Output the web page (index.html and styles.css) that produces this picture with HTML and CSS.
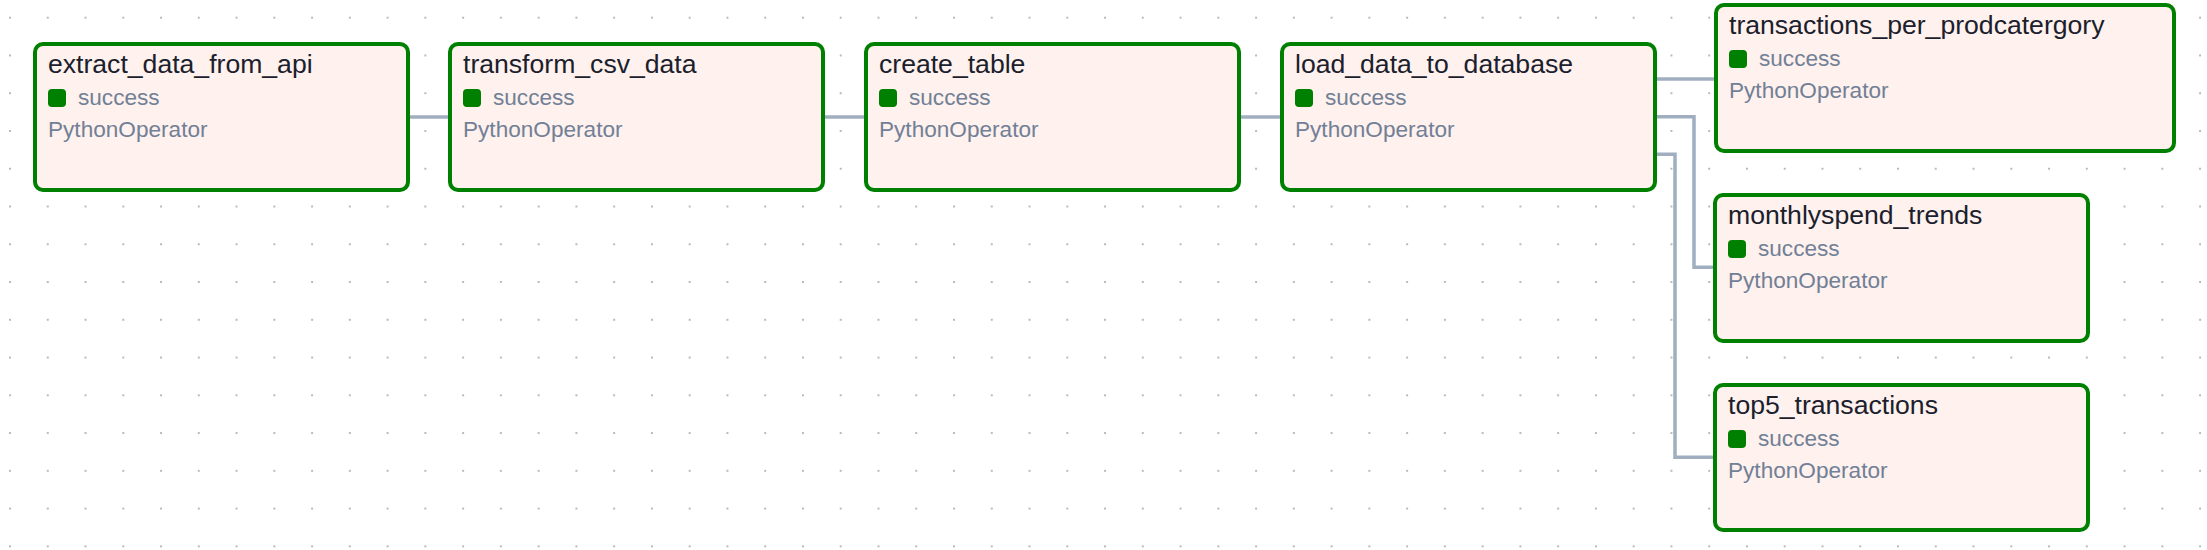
FILE: index.html
```html
<!DOCTYPE html>
<html>
<head>
<meta charset="utf-8">
<link rel="stylesheet" href="styles.css">
</head>
<body>
<div class="canvas">
  <svg class="layer" width="2207" height="550" viewBox="0 0 2207 550">
    <defs>
      <pattern id="dots" patternUnits="userSpaceOnUse" x="-8.88" y="-1.18" width="37.76" height="37.76">
        <circle cx="18.88" cy="18.88" r="1" fill="#a3a3a3"/>
      </pattern>
    </defs>
    <rect width="2207" height="550" fill="url(#dots)"/>
    <g class="edges" fill="none" stroke="#a0aec0" stroke-width="3.5">
      <path d="M410 117 H449"/>
      <path d="M825 117 H865"/>
      <path d="M1241 117 H1281"/>
      <path d="M1656 79 H1715"/>
      <path d="M1656 116.7 H1694 V267.3 H1714"/>
      <path d="M1656 154.3 H1675 V457.3 H1714"/>
    </g>
  </svg>

  <div class="node" style="left:33px;top:42px;width:377px;height:150px">
    <div class="title">extract_data_from_api</div>
    <div class="state"><span class="sq"></span>success</div>
    <div class="op">PythonOperator</div>
  </div>
  <div class="node" style="left:448px;top:42px;width:377px;height:150px">
    <div class="title">transform_csv_data</div>
    <div class="state"><span class="sq"></span>success</div>
    <div class="op">PythonOperator</div>
  </div>
  <div class="node" style="left:864px;top:42px;width:377px;height:150px">
    <div class="title">create_table</div>
    <div class="state"><span class="sq"></span>success</div>
    <div class="op">PythonOperator</div>
  </div>
  <div class="node" style="left:1280px;top:42px;width:377px;height:150px">
    <div class="title">load_data_to_database</div>
    <div class="state"><span class="sq"></span>success</div>
    <div class="op">PythonOperator</div>
  </div>
  <div class="node" style="left:1714px;top:3px;width:462px;height:150px">
    <div class="title">transactions_per_prodcatergory</div>
    <div class="state"><span class="sq"></span>success</div>
    <div class="op">PythonOperator</div>
  </div>
  <div class="node" style="left:1713px;top:193px;width:377px;height:150px">
    <div class="title">monthlyspend_trends</div>
    <div class="state"><span class="sq"></span>success</div>
    <div class="op">PythonOperator</div>
  </div>
  <div class="node" style="left:1713px;top:383px;width:377px;height:149px">
    <div class="title">top5_transactions</div>
    <div class="state"><span class="sq"></span>success</div>
    <div class="op">PythonOperator</div>
  </div>
</div>
</body>
</html>
```
FILE: styles.css
```css
html, body {
  margin: 0;
  padding: 0;
  background: #ffffff;
  overflow: hidden;
}
.canvas {
  position: relative;
  width: 2207px;
  height: 550px;
  font-family: "Liberation Sans", Arial, sans-serif;
}
.layer {
  position: absolute;
  left: 0;
  top: 0;
}
.node {
  position: absolute;
  box-sizing: border-box;
  border: 4px solid #008000;
  border-radius: 10px;
  background: #fff1ed;
  padding: 3px 11px 0 11px;
}
.title {
  font-size: 26.6px;
  line-height: 30px;
  color: #1a202c;
  white-space: nowrap;
}
.state {
  display: flex;
  align-items: center;
  margin-top: 3px;
  font-size: 22.6px;
  line-height: 32px;
  color: #718096;
}
.sq {
  width: 18px;
  height: 18px;
  border-radius: 4px;
  background: #008000;
  margin-right: 12px;
}
.op {
  font-size: 22.6px;
  line-height: 32px;
  color: #718096;
}
```
